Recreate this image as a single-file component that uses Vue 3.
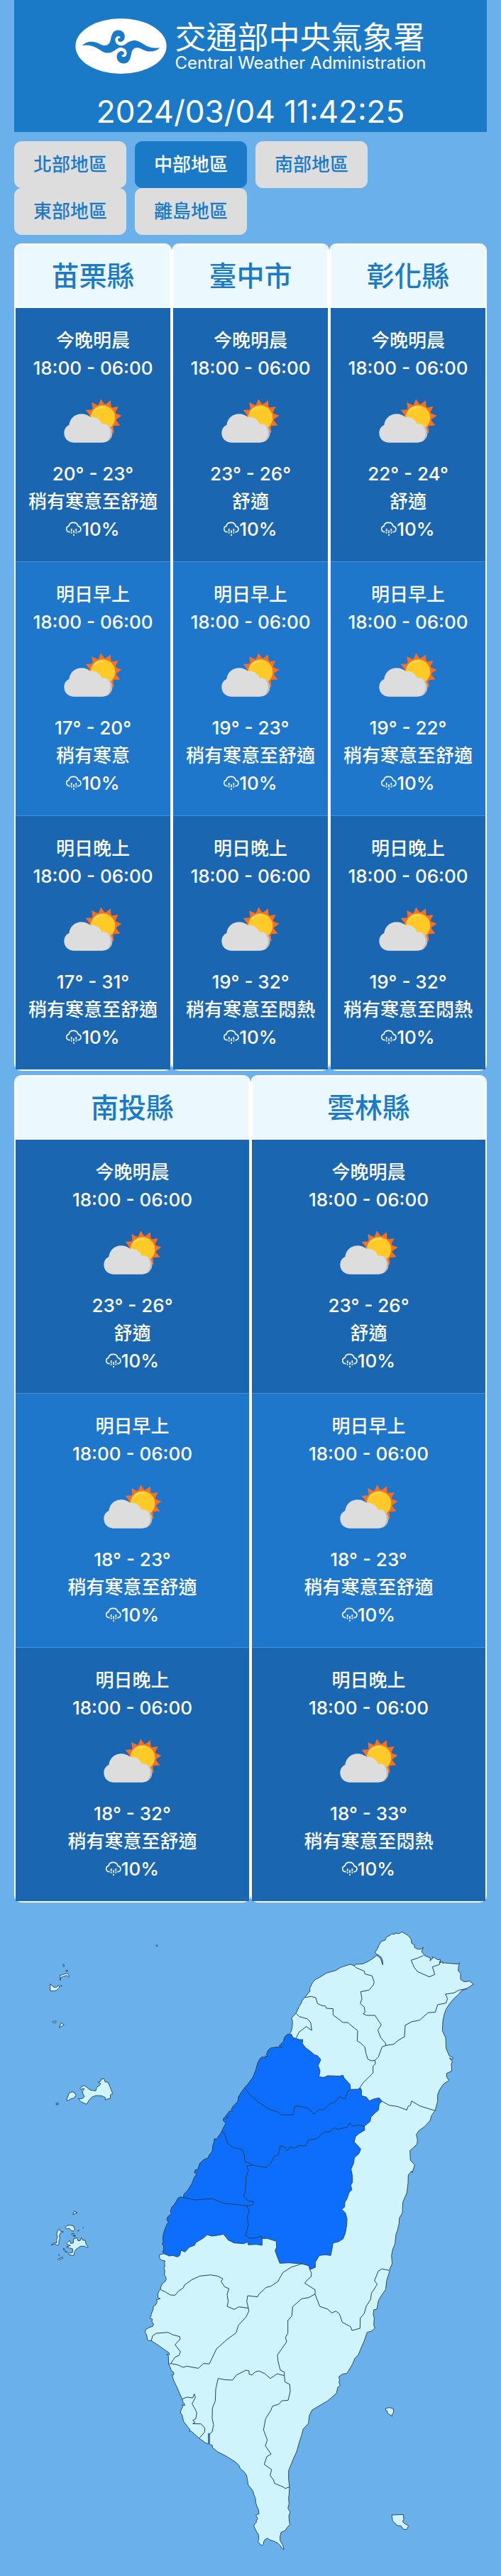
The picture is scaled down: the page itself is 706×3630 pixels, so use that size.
<script setup>
import { ref } from 'vue'

const regions = ['北部地區', '中部地區', '南部地區', '東部地區', '離島地區']
const active = ref('中部地區')

const mild = '稍有寒意至舒適'
const muggy = '稍有寒意至悶熱'
const periods = ['今晚明晨', '明日早上', '明日晚上']

function county(name, ...forecasts) {
  return {
    name,
    slots: forecasts.map(([temp, feel], i) => ({ period: periods[i], temp, feel, rain: '10%' })),
  }
}

const groups = [
  [
    county('苗栗縣', ['20° - 23°', mild], ['17° - 20°', '稍有寒意'], ['17° - 31°', mild]),
    county('臺中市', ['23° - 26°', '舒適'], ['19° - 23°', mild], ['19° - 32°', muggy]),
    county('彰化縣', ['22° - 24°', '舒適'], ['19° - 22°', mild], ['19° - 32°', muggy]),
  ],
  [
    county('南投縣', ['23° - 26°', '舒適'], ['18° - 23°', mild], ['18° - 32°', mild]),
    county('雲林縣', ['23° - 26°', '舒適'], ['18° - 23°', mild], ['18° - 33°', muggy]),
  ],
]

/* Twelve pointed rays around the sun disc */
const rays = Array.from({ length: 24 }, (_, i) => {
  const angle = ((-96 + i * 15) * Math.PI) / 180
  const r = i % 2 ? 55 : 80
  return `${(192 + r * Math.cos(angle)).toFixed(1)},${(176 + r * Math.sin(angle)).toFixed(1)}`
}).join(' ')

/* Map sections are drawn on their own sheets and shifted onto a shared one */
function points(text, dx = 0, dy = 0) {
  return text
    .trim()
    .split(/\s+/)
    .map((pair) => {
      const [x, y] = pair.split(',').map(Number)
      return `${x + dx},${y + dy}`
    })
    .join(' ')
}
const north = (t) => points(t)
const centre = (t) => points(t, 0, 810)
const south = (t) => points(t, -60, 1530)
const west = (t) => points(t, -480, -30)

const southWestCoast = south(`660,1178 652,1174 645,1162 633,1150 618,1143 600,1137 590,1130 580,1136 575,1145 574,1156
570,1160 562,1158 555,1150 550,1145 554,1135 553,1115 546,1105 537,1088 533,1078 538,1068 545,1062 543,1058 549,1048
546,1040 541,1033 555,1027 553,1010 545,993 541,978 540,962 533,945 530,932 520,918 509,905 507,890 502,864 492,850
475,835 470,822 455,808 440,798 410,780 380,765 358,747 358,738 346,733 346,688 341,688 341,732 330,728 302,708 280,688
268,678 260,678 264,672 250,655 237,638 234,628 230,610 223,600 225,588 232,575 230,566 240,570 240,562 234,556 230,542
220,520 208,492 195,465 187,440 194,440 195,430 188,424 184,422 180,408 173,395 172,360 165,352 176,355 175,347 155,333
130,315 110,302 98,294 90,296 83,290 80,270 74,262 75,248 90,240 106,234 109,225 102,215 104,204 93,200 98,192 100,180
107,165 108,150 118,144 124,132 122,122 138,118 128,113 127,100 132,85 138,80 140,68 147,53 158,45 163,35 161,25 155,18 157,0`)
const chiayiCoast = centre('93,710 97,700 95,685 98,678 80,674 74,665 74,652 90,648')
const centralCoast =
  centre(`95,648 88,640 92,630 92,615 86,605 90,598 89,575 95,550 105,525 112,515 107,505 108,493 115,487 124,478 121,466
127,450 137,440 145,427 153,412 162,408 177,410 176,400 185,388 195,378 212,350 220,328 232,310 222,305 226,293 236,292
245,265 262,250 280,242 285,230 297,215 300,190 305,175 306,162 316,163 335,135 342,120 350,105 355,95 344,85 345,75
355,65 360,75 355,80 363,70 357,62 370,45 383,45 378,38 385,25 405,5`) +
  ' ' +
  north(`408,795 420,775 435,755 450,738 470,710 480,685 490,650 500,632 510,625 522,632 520,622 533,623 527,615 533,598
545,588 580,583 593,587 590,582 580,578 598,560 603,542 612,532`)
const northCoast = north(`625,528 632,515 635,500 637,475 632,462 652,440 665,412 676,395 675,390 690,372 710,348 710,333
722,310 735,297 750,290 780,271 820,260 840,247 880,234 897,240 905,234 935,232 960,220 985,203 990,196 1000,200
1010,212 1018,237 1018,220 1012,205 1000,195 990,190 985,183 995,170 1002,153 1012,137 1028,132 1035,118 1050,111
1055,106 1070,106 1073,99 1077,104 1090,103 1098,97 1110,103 1125,112 1138,127 1140,145 1152,152 1152,162 1165,170
1180,170 1190,162 1182,180 1190,190 1195,197 1220,208 1218,220 1228,210 1228,203 1240,208 1250,215 1262,213 1260,228
1270,222 1272,230 1280,228 1335,233 1342,228 1338,248 1337,262 1347,272 1347,298 1362,308 1385,305 1402,318 1375,335
1350,347 1340,360 1318,380 1300,402 1285,425 1277,450 1272,475 1270,515 1284,545 1286,590 1300,622 1315,628 1313,636
1300,630 1312,645 1308,657 1310,685 1288,695 1288,710 1298,725 1275,740 1258,765 1250,785 1250,812`)
const eastCoast =
  centre(`1240,42 1225,62 1218,85 1195,110 1170,128 1160,145 1165,165 1163,185 1133,212 1135,252 1153,272 1143,305
1140,298 1126,315 1125,350 1120,390 1103,430 1101,475 1088,498 1087,520 1080,550 1074,565 1070,605 1060,630 1055,655
1058,690 1048,712 1046,725 1035,760 1030,800 1015,820 1000,845 993,882 980,885 978,905`) +
  ' ' +
  south(`1042,200 1040,230 1045,242 1030,255 1012,260 1000,295 985,330 975,355 960,370 950,395 935,420 925,434 908,436
892,448 896,460 893,470 898,485 888,492 882,518 845,550 810,570 780,588 768,610 764,645 742,668 735,695 725,725 715,762
700,795 690,820 680,845 680,880 684,915 682,945 680,960 682,985 677,1003 687,1020 681,1035 683,1060 686,1072 675,1084
665,1098 648,1106 644,1125 644,1140 655,1158`)
const mainland = [southWestCoast, chiayiCoast, centralCoast, northCoast, eastCoast].join(' ')

const selectedArea = [
  centralCoast,
  north(`632,530 638,543 650,547 668,553 680,552 678,568 690,585 710,600 730,617 742,620 756,637 745,662 753,685
748,710 770,712 785,705 815,706 835,707 850,703 855,715 880,742 881,763 915,762 922,755 928,765 928,790 948,795 962,812
980,803 1003,799 1015,813 1003,825 1000,850 985,863 968,880 965,898 945,915`),
  centre(`940,110 942,125 920,138 903,152 897,175 910,188 925,205 917,225 898,242 895,265 884,290 890,320 890,345
883,358 887,377 875,390 867,415 858,430 857,450 845,460 860,475 867,500 866,525 860,560 850,585 830,597 808,602 803,630
798,655 775,652 750,655 733,683 733,705 710,715 705,698 675,690 620,686 583,688 572,660 563,635 569,620 568,595 530,583
508,583 508,612 485,608 450,610 447,598 430,605 390,602 365,590 345,565 320,570 295,573 275,567 262,580 245,590 228,600
222,612 200,620 182,640 165,633 160,655 150,661 130,655 115,657`),
].join(' ')

const borders = [
  north(`435,757 455,783 490,815 540,848 570,856 590,871 640,870 645,835 660,833 703,842 727,868 745,850 770,848
795,823 815,818 838,792 850,802 860,800 868,775 881,763`),
  centre(`338,132 350,140 362,180 385,198 425,208 433,230 435,258 455,264 468,273 495,278 525,283 545,265 560,235
577,230 585,192 605,196 615,213 625,197 645,202 663,190 690,192 705,167 740,162 768,133 795,132 812,115 830,122 868,112
878,95 893,108 915,103 940,110`),
  centre(`468,273 443,277 450,295 440,325 438,375 431,405 450,425 472,427 470,440 450,446 380,437 350,436 298,415
225,420 175,410`),
  centre('443,446 453,465 445,495 450,525 438,570 455,582 475,582 505,573 508,583'),
  north(`690,374 715,370 735,375 742,400 760,408 775,410 780,420 808,422 808,448 850,480 870,480 885,493 912,515
910,558 925,567 943,585 947,610 955,635 970,642 985,640`),
  north('922,755 935,735 977,693 977,665 987,655 985,640 1000,625 1015,583 1032,577'),
  north(`1032,577 1028,565 1010,545 997,512 1012,490 985,450 950,450 935,443 943,437 940,415 923,400 930,380 925,350
960,343 978,322 982,310 973,283 943,275 940,263 905,248 897,240`),
  north(`1032,577 1065,572 1080,558 1110,540 1113,492 1140,477 1175,470 1210,438 1240,437 1250,405 1285,398 1292,380
1283,360 1320,355 1340,343 1375,337`),
  north('1190,197 1165,208 1138,217 1150,245 1165,265 1215,287 1238,277 1228,245 1258,235 1260,220'),
  north('652,442 665,455 700,465 713,480 718,513 708,507 695,497 665,520 652,545'),
  north('1015,813 1045,830 1080,835 1120,850 1125,835 1135,830 1140,812 1175,833 1240,853'),
  south(`140,80 160,90 180,102 200,103 215,85 235,72 240,60 270,38 305,22 350,17 380,22 402,33 395,45 410,68 428,75
420,100 425,130 420,150 450,163 470,152 510,158`),
  south('510,158 503,130 507,105 548,110 555,98 585,70 605,65 635,45 655,8 690,-15 735,-30'),
  south(`510,158 512,170 500,195 468,230 458,262 420,290 375,330 345,393 320,392 298,412 250,403 235,408 210,397
182,392 172,395`),
  south('100,294 105,275 120,264 170,260 190,270 220,278 222,288 200,312 223,342 217,357 200,365 182,392'),
  south(`770,-5 777,10 775,25 760,38 748,52 792,80 792,98 800,120 812,150 845,162 863,178 880,170 895,182 907,217
942,236 948,252 982,243 983,200 1000,180 1008,150 1027,120 1030,95 1055,57 1043,42 1060,0 1075,-8 1105,-2`),
  south(`792,98 765,113 735,118 697,152 694,190 677,210 677,265 667,280 672,300 633,355 635,380 645,420 662,428
662,443`),
  south(`662,443 632,435 603,455 580,435 555,423 540,427 525,440 513,437 513,423 500,420 460,440 443,462 410,460
382,455 372,500 370,550 358,580 357,625 363,650 357,680 346,690`),
  south(`662,443 665,470 685,480 687,510 678,547 650,550 640,563 612,572 605,590 583,625 574,672 590,715 582,740
606,775 588,785 577,818 608,840 602,865 617,885 620,898 660,915 665,920 684,914`),
  south(`230,542 250,534 275,537 281,520 286,535 272,562 285,585 292,600 288,625 275,632 285,640 275,646 310,647
326,665 325,682 302,708`),
]

const islands = [
  north('59,156 62,152 67,154 66,158'),
  west('145,272 148,263 151,268 151,274'),
  west('157,292 162,289 167,291 161,294'),
  west('134,311 165,301 173,314 170,319 163,311 146,316 136,321 135,332'),
  west('92,347 108,361 118,361 128,353 132,361 119,374 107,377 92,376'),
  west('137,353 141,354 140,358'),
  west('103,505 118,504 115,511 104,511'),
  west('138,511 151,520 131,532 134,522'),
  west('116,853 121,855 122,849 129,855 124,857 118,858'),
  west('165,827 173,807 186,803 195,807 202,818 191,830 179,833 170,840 161,838'),
  west(`211,833 227,832 237,824 230,810 228,800 237,791 229,789 222,794 218,787 234,776 246,783 262,796 285,799 289,784
302,775 305,768 295,763 306,758 308,749 320,748 325,762 336,762 345,782 350,795 356,811 347,816 346,832 335,833 325,838
325,827 310,820 287,819 269,825 257,838 246,856 222,845`),
  west('189,1318 194,1307 207,1314 198,1317 189,1323'),
  west('155,1376 163,1369 178,1367 190,1370 197,1386 190,1392 181,1390 174,1381 163,1382'),
  west('183,1403 194,1402 191,1410 184,1408'),
  west('190,1412 199,1411 197,1417'),
  west('208,1390 214,1388 211,1393'),
  west('230,1378 233,1377 232,1380'),
  west(`124,1389 132,1384 136,1393 148,1395 135,1400 131,1412 133,1424 129,1433 129,1449 122,1452 112,1446 96,1452
104,1444 120,1441 118,1429 123,1418 120,1405`),
  west(`162,1444 175,1431 179,1444 190,1442 191,1425 206,1420 210,1433 219,1432 224,1420 231,1431 240,1430 244,1448
253,1459 246,1462 239,1456 220,1456 201,1470 195,1480 192,1495 173,1493 168,1486 187,1482 187,1467 173,1463 161,1458
178,1453 164,1448`),
  west('149,1464 154,1473 149,1472'),
  west('155,1477 165,1480 159,1482'),
  west('127,1492 132,1493 129,1495'),
  west('124,1510 145,1502 144,1508 128,1514'),
  south('1090,582 1105,578 1123,582 1124,598 1117,608 1118,615 1098,602 1097,592 1090,590'),
  south('1116,1032 1165,1030 1167,1050 1162,1060 1170,1068 1187,1078 1180,1094 1165,1092 1155,1078 1140,1077 1120,1058'),
]
</script>

<template>
  <div class="page">
    <header class="banner">
      <div class="brand">
        <svg class="emblem" viewBox="50 47 388 236" aria-hidden="true">
          <ellipse cx="244" cy="165" rx="194" ry="118" fill="#fff" />
          <path
            fill="#1a7ac8"
            d="M78 162C98 142 128 142 152 155C172 166 196 168 201 132C206 106 216 97 232 97C250 97 261 110 260 126C259 141 249 148 240 147C229 146 228 132 236 131C243 133 243 124 234 123C224 122 218 132 220 144C222 157 236 164 248 163C266 161 272 142 300 141C336 141 345 180 410 172C390 192 360 192 336 179C316 168 292 166 287 202C282 228 272 239 256 239C238 239 225 226 226 208C227 193 239 185 248 186C259 188 260 202 252 203C245 201 245 210 254 211C264 212 270 202 268 190C266 177 252 170 240 171C222 173 216 193 188 194C152 193 143 154 78 162Z"
          />
        </svg>
        <div class="brand-text">
          <h1>交通部中央氣象署</h1>
          <p>Central Weather Administration</p>
        </div>
      </div>
      <time class="clock" datetime="2024-03-04T11:42:25">2024/03/04 11:42:25</time>
    </header>

    <nav class="regions" aria-label="地區">
      <button
        v-for="region in regions"
        :key="region"
        type="button"
        class="region"
        :class="{ active: region === active }"
        :aria-pressed="region === active"
        @click="active = region"
      >
        {{ region }}
      </button>
    </nav>

    <main>
      <section v-for="(group, g) in groups" :key="g" class="group">
        <article v-for="c in group" :key="c.name" class="card">
          <h2>{{ c.name }}</h2>
          <div v-for="slot in c.slots" :key="slot.period" class="slot">
            <p>{{ slot.period }}</p>
            <p>18:00 - 06:00</p>
            <svg class="weather" viewBox="27 96 246 186" aria-hidden="true">
              <polygon :points="rays" fill="#f4702a" />
              <circle cx="192" cy="176" r="58" fill="#f4702a" />
              <circle cx="192" cy="176" r="52" fill="#ffca28" />
              <path d="M145 160C151 140 168 128 187 128C196 128 202 130 207 134C180 130 160 142 145 160Z" fill="#ffdc50" />
              <path
                d="M68 281C45 281 28 263 28 241C28 225 36 212 49 207C52 180 73 160 102 160C117 160 128 165 138 173C162 171 180 183 188 203C212 198 232 217 232 241C232 264 214 281 190 281Z"
                fill="#ddd"
              />
              <path d="M211 207C231 228 228 258 208 276C240 262 239 220 211 207Z" fill="#bdbdbd" />
            </svg>
            <p>{{ slot.temp }}</p>
            <p>{{ slot.feel }}</p>
            <p class="rain">
              <svg viewBox="42 612 66 66" aria-hidden="true">
                <g fill="none" stroke="#fff" stroke-width="5">
                  <path d="M59 656C41 656 39 633 54 631C57 611 89 611 93 631C109 635 109 656 91 656" />
                  <path d="M65 642V653M65 656V662M75 649V661M75 665V672M85 642V653M85 656V662" />
                </g>
              </svg>
              <span>{{ slot.rain }}</span>
            </p>
          </div>
        </article>
      </section>
    </main>

    <svg class="map" viewBox="-600 0 2118 2820" role="img" aria-label="臺灣地圖">
      <polygon class="land" :points="mainland" />
      <polygon v-for="(shape, i) in islands" :key="'i' + i" class="land" :points="shape" />
      <polygon class="land selected" :points="selectedArea" />
      <polyline v-for="(line, i) in borders" :key="'b' + i" class="border" :points="line" />
    </svg>
  </div>
</template>

<style>
body {
  margin: 0;
  background: #6ab1ec;
}
</style>

<style scoped>
.page {
  background: #6ab1ec;
  font-family: Inter, "Noto Sans CJK TC", sans-serif;
  font-size: 26px;
  line-height: 39px;
  font-weight: 500;
  color: #fff;
}
h1,
h2,
p {
  margin: 0;
}
.banner {
  margin: 0 20px;
  padding-top: 26px;
  background: #1a7ac8;
  text-align: center;
}
.brand {
  display: flex;
  justify-content: center;
  align-items: center;
  gap: 12px;
}
.emblem {
  display: block;
  width: 129px;
  height: 78px;
}
.brand-text {
  text-align: left;
  font-weight: 400;
}
h1 {
  font-size: 44px;
  line-height: 48px;
  font-weight: 400;
}
.brand-text p {
  font-size: 24px;
  line-height: 24px;
}
.clock {
  display: block;
  margin-top: 25px;
  font-size: 44px;
  line-height: 57px;
  font-weight: 400;
}
.regions {
  display: flex;
  flex-wrap: wrap;
  gap: 0 12px;
  margin: 13px 20px 12px;
}
.region {
  padding: 13px 26px;
  border: 1px solid #ddd;
  border-radius: 10px;
  background: #ddd;
  color: #1a7ac8;
  font: inherit;
  line-height: 38px;
  cursor: pointer;
}
.region.active {
  border-color: #1a7ac8;
  background: #1a7ac8;
  color: #fff;
}
.group {
  display: flex;
  margin: 0 20px 6px;
}
.card {
  flex: 1 1 0;
  min-width: 0;
  border: 2px solid #fff;
  border-radius: 10px;
  text-align: center;
}
h2 {
  padding: 14px 0;
  border: 1px solid #fff;
  border-bottom-width: 2px;
  border-radius: 8px 8px 0 0;
  background: #ebf9fe;
  color: #1a7ac8;
  font-size: 39px;
  line-height: 58px;
  font-weight: 500;
}
.slot {
  padding: 26px 0;
  background: #1b66b1;
}
.slot + .slot {
  border-top: 1px solid #4b8fd6;
}
.slot:nth-of-type(even) {
  background: #1f77cb;
}
.weather {
  display: block;
  width: 82px;
  height: 62px;
  margin: 24px auto;
}
.rain {
  display: flex;
  justify-content: center;
  align-items: center;
}
.rain svg {
  width: 22px;
  height: 22px;
}
.map {
  display: block;
  width: 100%;
  height: auto;
  margin-top: 9px;
}
.land {
  fill: #cff4fc;
  stroke: #294a66;
  stroke-width: 3;
  stroke-linejoin: round;
}
.selected {
  fill: #0d6efd;
}
.border {
  fill: none;
  stroke: #1d405f;
  stroke-width: 3;
  stroke-linejoin: round;
}
</style>
